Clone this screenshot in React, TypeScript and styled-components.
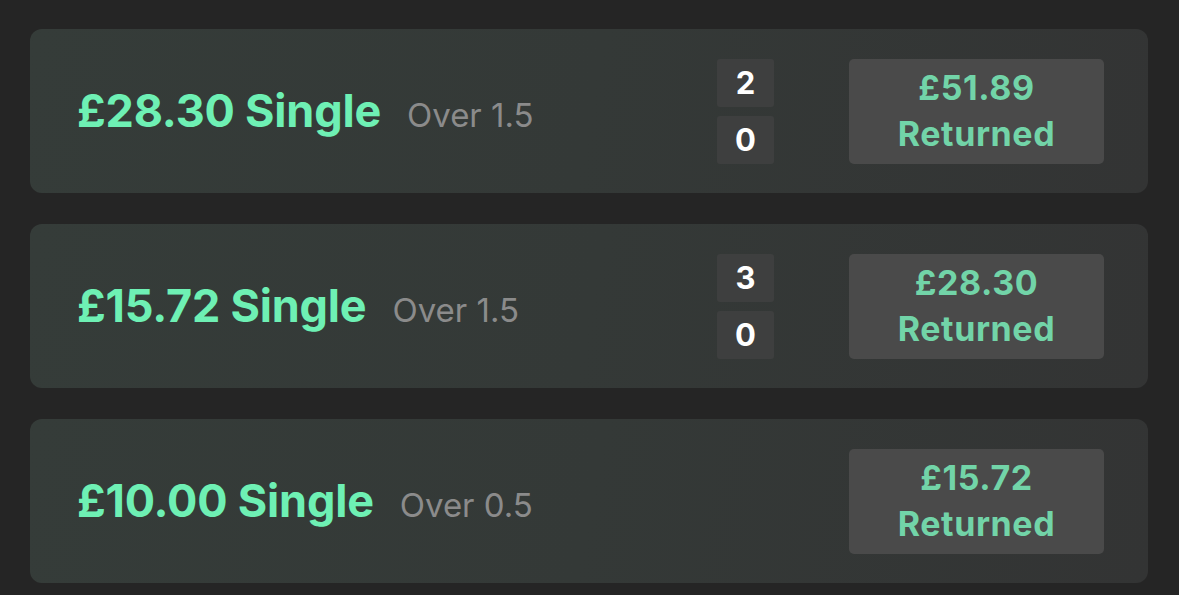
import React, { FC } from "react";
import styled, { createGlobalStyle } from "styled-components";

interface IBet {
  id: number;
  stake: string;
  market: string;
  score?: [number, number];
  returned: string;
}

const bets: IBet[] = [
  { id: 1, stake: "£28.30", market: "Over 1.5", score: [2, 0], returned: "£51.89" },
  { id: 2, stake: "£15.72", market: "Over 1.5", score: [3, 0], returned: "£28.30" },
  { id: 3, stake: "£10.00", market: "Over 0.5", returned: "£15.72" },
];

const GlobalStyle = createGlobalStyle`
  html, body {
    margin: 0;
    padding: 0;
    background: #252525;
  }
  body {
    font-family: Inter, "Noto Sans", sans-serif;
    -webkit-font-smoothing: antialiased;
  }
`;

const BetCard: FC<{ bet: IBet }> = ({ bet }) => (
  <Card>
    <Info>
      <Stake>{bet.stake} Single</Stake>
      <Market>{bet.market}</Market>
    </Info>

    <Side>
      {bet.score && (
        <Score>
          <ScoreCell>{bet.score[0]}</ScoreCell>
          <ScoreCell>{bet.score[1]}</ScoreCell>
        </Score>
      )}
      <Returned>
        <span>{bet.returned}</span>
        <span>Returned</span>
      </Returned>
    </Side>
  </Card>
);

export default function App() {
  return (
    <>
      <GlobalStyle />
      <Wrap>
        {bets.map(bet => (
          <BetCard key={bet.id} bet={bet} />
        ))}
      </Wrap>
    </>
  );
}

const Wrap = styled.div`
  display: flex;
  flex-direction: column;
  gap: 31px;
  padding: 29px 31px 12px 30px;
`;

const Card = styled.div`
  height: 164px;
  box-sizing: border-box;
  border-radius: 12px;
  background: linear-gradient(100deg, #353c39 0%, #343937 50%, #333434 100%);
  display: flex;
  align-items: center;
  justify-content: space-between;
  padding: 0 44px 0 47px;
`;

const Info = styled.div`
  display: flex;
  align-items: baseline;
  gap: 26px;
  margin-top: -2px;
`;

const Stake = styled.div`
  font-size: 45px;
  font-weight: 700;
  color: #6ef0b4;
  letter-spacing: -0.2px;
`;

const Market = styled.div`
  font-size: 33px;
  font-weight: 400;
  color: #8b8b8b;
`;

const Side = styled.div`
  display: flex;
  align-items: center;
  gap: 75px;
`;

const Score = styled.div`
  display: flex;
  flex-direction: column;
  gap: 9px;
`;

const ScoreCell = styled.div`
  width: 57px;
  height: 48px;
  border-radius: 3px;
  background: #3e3f3f;
  color: #ffffff;
  font-size: 31px;
  font-weight: 700;
  display: flex;
  align-items: center;
  justify-content: center;
`;

const Returned = styled.div`
  width: 255px;
  height: 105px;
  border-radius: 5px;
  background: #4a4a4a;
  color: #72d4a8;
  font-size: 34px;
  font-weight: 700;
  letter-spacing: 0.6px;
  line-height: 46px;
  display: flex;
  flex-direction: column;
  align-items: center;
  justify-content: center;
`;
